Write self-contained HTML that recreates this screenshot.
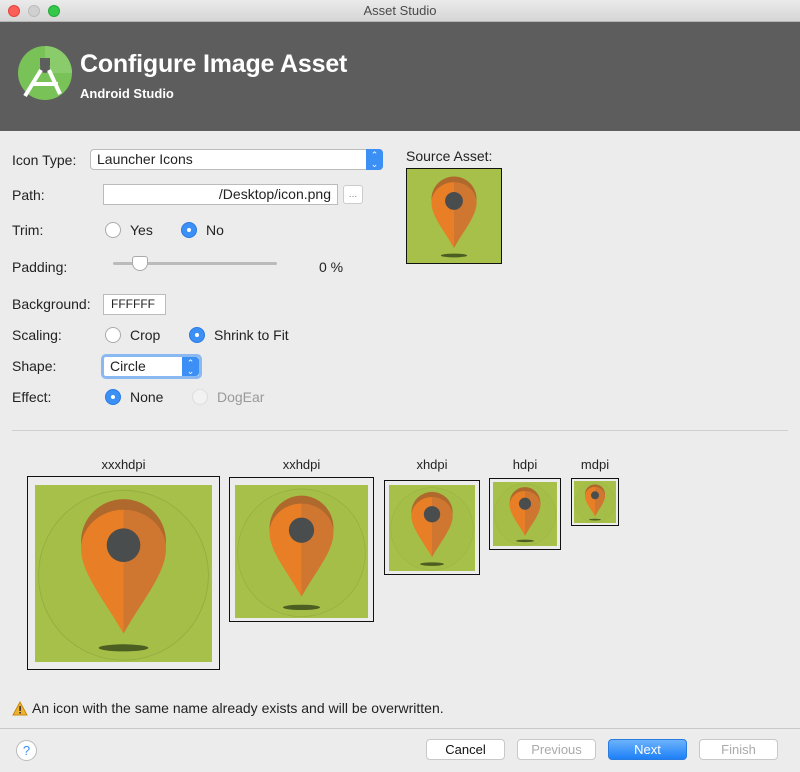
<!DOCTYPE html>
<html><head><style>
*{margin:0;padding:0;box-sizing:border-box}
body{width:800px;height:772px;background:#ececec;font-family:"Liberation Sans",sans-serif;font-size:14px;color:#222;position:relative;overflow:hidden}
.a{position:absolute}
.tb{left:0;top:0;width:800px;height:22px;background:linear-gradient(#ebebeb,#d6d6d6);border-bottom:1px solid #b5b5b5;text-align:center;line-height:22px;color:#4a4a4a;font-size:13px}
.dot{position:absolute;top:5px;width:12px;height:12px;border-radius:50%}
.hd{left:0;top:22px;width:800px;height:109px;background:#5d5d5d}
.lbl{position:absolute;left:12px}
.rad{position:absolute;width:16px;height:16px;border-radius:50%;background:#fff;border:1px solid #aaa}
.rad.on{background:#3b8ff5;border-color:#2a7be0}
.rad.on:after{content:"";position:absolute;left:5px;top:5px;width:4px;height:4px;border-radius:50%;background:#fff}
.box{position:absolute;border:1px solid #111;background:#ececec}
.cap{position:absolute;font-size:13px;text-align:center}
.btn{position:absolute;top:739px;width:79px;height:21px;border:1px solid #c8c8c8;border-radius:4px;background:#fff;text-align:center;line-height:19px;color:#aaa;font-size:13px}
</style></head><body>
<svg width="0" height="0" style="position:absolute"><defs>
<g id="pin">
<path d="M50 80 C40 62 26 46 26 32 A24 24 0 0 1 74 32 C74 46 60 62 50 80Z" fill="#b0692c"/>
<path d="M50 84 C40 66 26 50 26 36 A24 22 0 0 1 50 14 L50 84Z" fill="#e87e26"/>
<path d="M50 84 C60 66 74 50 74 36 A24 22 0 0 0 50 14 L50 84Z" fill="#cf7631"/>
<circle cx="50" cy="34" r="9.5" fill="#4a4d4e"/>
<ellipse cx="50" cy="92" rx="14" ry="2" fill="#4c5e22"/>
</g>
<g id="ic"><rect width="100" height="100" fill="#a6c04a"/><circle cx="50" cy="51" r="48" fill="#a4be48" stroke="#95ad40" stroke-width="0.5"/><use href="#pin"/></g>
</defs></svg>
<div class="a tb">Asset Studio
<div class="dot" style="left:8px;background:#fc5f57;border:1px solid #e0443e"></div>
<div class="dot" style="left:28px;background:#d0d0d0;border:1px solid #bbb"></div>
<div class="dot" style="left:48px;background:#34c84a;border:1px solid #24a93a"></div></div>
<div class="a hd">
<svg class="a" style="left:18px;top:24px" width="54" height="54" viewBox="0 0 54 54"><circle cx="27" cy="27" r="27" fill="#78c257"/><path d="M27 0 A27 27 0 0 1 54 27 L27 27Z" fill="#8acb6b"/><rect x="22" y="12" width="10" height="8" fill="#5d5d5d"/><circle cx="27" cy="22" r="5" fill="#5d5d5d"/><path d="M23 24 L7 50 M31 24 L42 48 M14 38 L40 38" stroke="#fff" stroke-width="4" fill="none"/></svg>
<div class="a" style="left:80px;top:28px;font-size:25px;color:#fff;font-weight:bold;letter-spacing:-0.2px">Configure Image Asset</div>
<div class="a" style="left:80px;top:64px;font-size:13px;color:#fff;font-weight:bold">Android Studio</div>
</div>
<div class="lbl" style="top:152px">Icon Type:</div>
<div class="a" style="left:90px;top:149px;width:293px;height:21px;background:#fff;border:1px solid #bbb;border-radius:4px;padding-left:6px;line-height:19px">Launcher Icons</div>
<div class="a" style="left:366px;top:149px;width:17px;height:21px;background:#3b8ff5;border-radius:0 4px 4px 0;color:#fff;font-size:9px;text-align:center;line-height:9px;padding-top:2px">⌃<br>⌄</div>
<div class="lbl" style="top:187px">Path:</div>
<div class="a" style="left:103px;top:184px;width:235px;height:21px;background:#fff;border:1px solid #bbb;text-align:right;padding-right:6px;line-height:19px">/Desktop/icon.png</div>
<div class="a" style="left:343px;top:185px;width:20px;height:19px;background:#fff;border:1px solid #ccc;border-radius:3px;font-size:10px;color:#888;text-align:center;line-height:18px">...</div>
<div class="lbl" style="top:222px">Trim:</div>
<div class="rad" style="left:105px;top:222px"></div><div class="a" style="left:130px;top:222px">Yes</div>
<div class="rad on" style="left:181px;top:222px"></div><div class="a" style="left:206px;top:222px">No</div>
<div class="lbl" style="top:259px">Padding:</div>
<div class="a" style="left:113px;top:262px;width:164px;height:3px;background:#bbb;border-radius:2px"></div>
<div class="a" style="left:132px;top:256px;width:16px;height:15px;background:#fff;border:1px solid #aaa;border-radius:3px 3px 8px 8px"></div>
<div class="a" style="left:319px;top:259px">0 %</div>
<div class="lbl" style="top:296px">Background:</div>
<div class="a" style="left:103px;top:294px;width:63px;height:21px;background:#fff;border:1px solid #bbb;padding-left:7px;line-height:19px;font-size:12px">FFFFFF</div>
<div class="lbl" style="top:327px">Scaling:</div>
<div class="rad" style="left:105px;top:327px"></div><div class="a" style="left:130px;top:327px">Crop</div>
<div class="rad on" style="left:189px;top:327px"></div><div class="a" style="left:214px;top:327px">Shrink to Fit</div>
<div class="lbl" style="top:358px">Shape:</div>
<div class="a" style="left:101px;top:354px;width:101px;height:25px;border:3px solid #8ab8f0;border-radius:5px;background:#fff;padding-left:6px;line-height:19px">Circle</div>
<div class="a" style="left:182px;top:357px;width:17px;height:19px;background:#3b8ff5;border-radius:0 3px 3px 0;color:#fff;font-size:9px;text-align:center;line-height:8px;padding-top:2px">⌃<br>⌄</div>
<div class="lbl" style="top:389px">Effect:</div>
<div class="rad on" style="left:105px;top:389px"></div><div class="a" style="left:130px;top:389px">None</div>
<div class="rad" style="left:192px;top:389px;border-color:#ddd;background:#f2f2f2"></div><div class="a" style="left:217px;top:389px;color:#999">DogEar</div>
<div class="a" style="left:406px;top:148px">Source Asset:</div>
<div class="box" style="left:406px;top:168px;width:96px;height:96px"><svg width="94" height="94" viewBox="0 0 100 100"><rect width="100" height="100" fill="#a6c04a"/><use href="#pin"/></svg></div>
<div class="a" style="left:12px;top:430px;width:776px;height:1px;background:#d0d0d0"></div>
<div class="cap" style="left:27px;top:457px;width:193px">xxxhdpi</div>
<div class="box" style="left:27px;top:476px;width:193px;height:194px;padding:8px 7px"><svg width="177" height="177" viewBox="0 0 100 100" style="display:block"><use href="#ic"/></svg></div>
<div class="cap" style="left:229px;top:457px;width:145px">xxhdpi</div>
<div class="box" style="left:229px;top:477px;width:145px;height:145px;padding:7px 5px"><svg width="133" height="133" viewBox="0 0 100 100" style="display:block"><use href="#ic"/></svg></div>
<div class="cap" style="left:384px;top:457px;width:96px">xhdpi</div>
<div class="box" style="left:384px;top:480px;width:96px;height:95px;padding:4px"><svg width="86" height="86" viewBox="0 0 100 100" style="display:block"><use href="#ic"/></svg></div>
<div class="cap" style="left:489px;top:457px;width:72px">hdpi</div>
<div class="box" style="left:489px;top:478px;width:72px;height:72px;padding:3px"><svg width="64" height="64" viewBox="0 0 100 100" style="display:block"><use href="#ic"/></svg></div>
<div class="cap" style="left:571px;top:457px;width:48px">mdpi</div>
<div class="box" style="left:571px;top:478px;width:48px;height:48px;padding:2px"><svg width="42" height="42" viewBox="0 0 100 100" style="display:block"><use href="#ic"/></svg></div>
<svg class="a" style="left:12px;top:701px" width="16" height="15" viewBox="0 0 16 15"><path d="M8 1 L15 14 L1 14Z" fill="#f0b030" stroke="#c88a10"/><rect x="7.3" y="5" width="1.6" height="5" fill="#333"/><rect x="7.3" y="11" width="1.6" height="1.6" fill="#333"/></svg>
<div class="a" style="left:32px;top:700px">An icon with the same name already exists and will be overwritten.</div>
<div class="a" style="left:0;top:728px;width:800px;height:1px;background:#c8c8c8"></div>
<div class="a" style="left:16px;top:740px;width:21px;height:21px;border-radius:50%;background:#fff;border:1px solid #bbb;color:#3b8ff5;text-align:center;line-height:19px;font-size:13px">?</div>
<div class="btn" style="left:426px;color:#111">Cancel</div>
<div class="btn" style="left:517px">Previous</div>
<div class="btn" style="left:608px;background:linear-gradient(#6cb2fb,#1e80f7);border-color:#2a7be0;color:#fff">Next</div>
<div class="btn" style="left:699px">Finish</div>
</body></html>
